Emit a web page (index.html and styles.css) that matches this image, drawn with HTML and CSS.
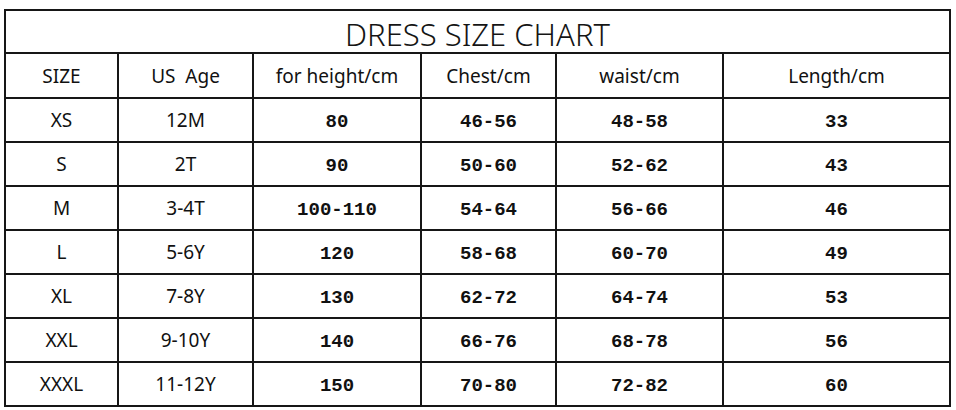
FILE: index.html
```html
<!DOCTYPE html>
<html>
<head>
<meta charset="utf-8">
<link rel="stylesheet" href="styles.css">
</head>
<body>
<div class="chart">
  <div class="cell title">DRESS SIZE CHART</div>
  <div class="cell hd">SIZE</div>
  <div class="cell hd">US&nbsp; Age</div>
  <div class="cell hd">for height/cm</div>
  <div class="cell hd">Chest/cm</div>
  <div class="cell hd">waist/cm</div>
  <div class="cell hd">Length/cm</div>

  <div class="cell sz">XS</div><div class="cell sz">12M</div><div class="cell num">80</div><div class="cell num">46-56</div><div class="cell num">48-58</div><div class="cell num">33</div>
  <div class="cell sz">S</div><div class="cell sz">2T</div><div class="cell num">90</div><div class="cell num">50-60</div><div class="cell num">52-62</div><div class="cell num">43</div>
  <div class="cell sz">M</div><div class="cell sz">3-4T</div><div class="cell num">100-110</div><div class="cell num">54-64</div><div class="cell num">56-66</div><div class="cell num">46</div>
  <div class="cell sz">L</div><div class="cell sz">5-6Y</div><div class="cell num">120</div><div class="cell num">58-68</div><div class="cell num">60-70</div><div class="cell num">49</div>
  <div class="cell sz">XL</div><div class="cell sz">7-8Y</div><div class="cell num">130</div><div class="cell num">62-72</div><div class="cell num">64-74</div><div class="cell num">53</div>
  <div class="cell sz">XXL</div><div class="cell sz">9-10Y</div><div class="cell num">140</div><div class="cell num">66-76</div><div class="cell num">68-78</div><div class="cell num">56</div>
  <div class="cell sz">XXXL</div><div class="cell sz">11-12Y</div><div class="cell num">150</div><div class="cell num">70-80</div><div class="cell num">72-82</div><div class="cell num">60</div>
</div>
</body>
</html>
```
FILE: styles.css
```css
html, body {
  margin: 0;
  padding: 0;
  background: #ffffff;
}

body {
  padding: 9px 0 0 4px;
  font-family: "Noto Sans", "Noto Sans CJK SC", sans-serif;
  color: #111111;
}

.chart {
  display: grid;
  width: 947px;
  box-sizing: border-box;
  grid-template-columns: 113px 135px 168px 135px 167px 227px;
  grid-template-rows: 43px 45px repeat(7, 44px);
  border-top: 2px solid #161616;
  border-left: 2px solid #161616;
}

.cell {
  box-sizing: border-box;
  border-right: 2px solid #161616;
  border-bottom: 2px solid #161616;
  display: flex;
  align-items: center;
  justify-content: center;
  white-space: nowrap;
}

.title {
  grid-column: 1 / -1;
  font-size: 31px;
  font-weight: 300;
  padding-top: 4px;
  color: #151515;
}

.hd {
  font-size: 19px;
  padding-top: 1px;
}

.sz {
  font-size: 19px;
}

.num {
  font-family: "Liberation Mono", "DejaVu Sans Mono", monospace;
  font-weight: bold;
  font-size: 19px;
  padding-top: 3px;
}
```
